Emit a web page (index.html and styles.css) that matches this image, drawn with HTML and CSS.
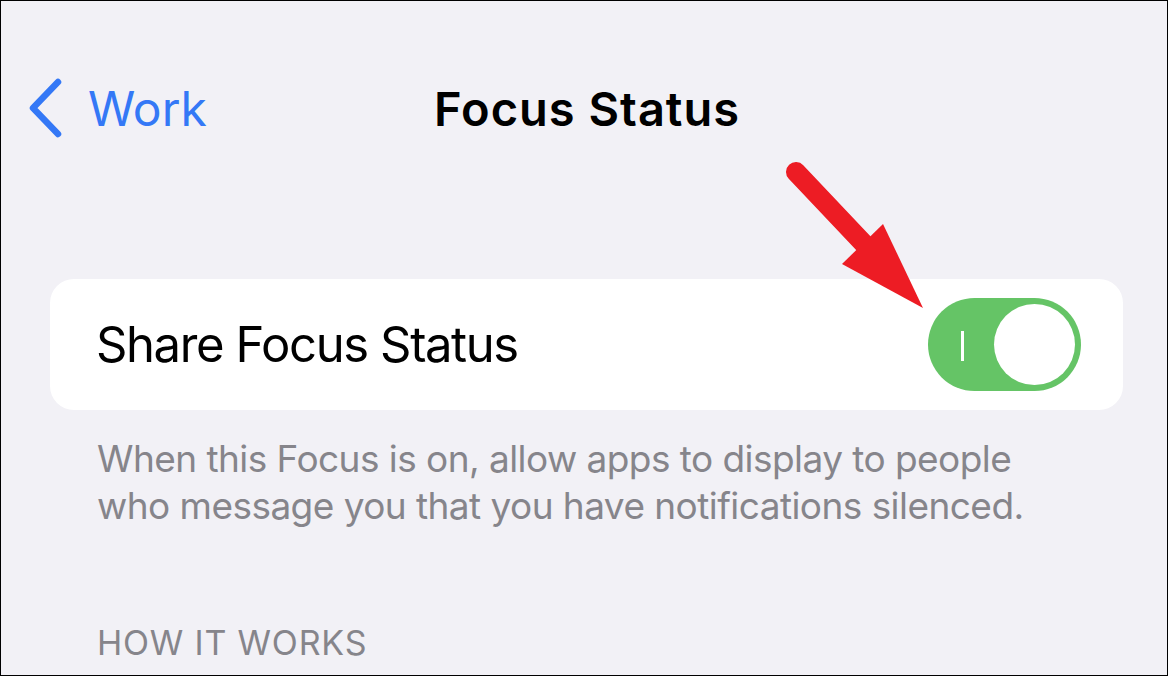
FILE: index.html
```html
<!DOCTYPE html>
<html>
<head>
<meta charset="UTF-8">
<title>Focus Status</title>
<link rel="stylesheet" href="styles.css">
</head>
<body>
  <div class="screen">
    <div class="nav">
      <a class="back" href="#">
        <svg class="chevron" width="40" height="60" viewBox="0 0 40 60">
          <polyline points="32,4 7,30 32,56" fill="none" stroke="#3478f6" stroke-width="6.5" stroke-linecap="round" stroke-linejoin="round"/>
        </svg>
        <span>Work</span>
      </a>
      <div class="title">Focus Status</div>
      <div></div>
    </div>

    <div class="card">
      <div class="card-label">Share Focus Status</div>
      <div class="toggle on">
        <span class="toggle-mark"></span>
        <span class="toggle-knob"></span>
      </div>
    </div>

    <p class="footnote">When this Focus is on, allow apps to display to people who message you that you have notifications silenced.</p>

    <div class="section-header">HOW IT WORKS</div>

    <!-- annotation arrow -->
    <svg class="arrow" width="1168" height="676" viewBox="0 0 1168 676">
      <line x1="796" y1="172" x2="866" y2="246" stroke="#ed1c24" stroke-width="20" stroke-linecap="round"/>
      <polygon points="883,224 842,264 923,308" fill="#ed1c24"/>
    </svg>
  </div>
</body>
</html>
```

FILE: styles.css
```css
* {
  box-sizing: border-box;
}

body {
  margin: 0;
  font-family: Inter, "Noto Sans", Arial, sans-serif;
}

.screen {
  position: relative;
  width: 1168px;
  height: 676px;
  border: 1px solid #000;
  background-color: #f2f1f6;
  overflow: hidden;
}

.nav {
  display: grid;
  grid-template-columns: 1fr auto 1fr;
  align-items: center;
  height: 78px;
  margin-top: 68px;
}

.back {
  display: flex;
  align-items: center;
  gap: 22px;
  padding-left: 25px;
  color: #3478f6;
  text-decoration: none;
  font-size: 48px;
}

.title {
  font-size: 47px;
  font-weight: 600;
  letter-spacing: 1px;
  color: #000;
  padding-left: 6px;
}

.card {
  display: flex;
  align-items: center;
  justify-content: space-between;
  height: 131px;
  margin: 132px 44px 0 49px;
  padding: 0 42px 0 46px;
  background-color: #fff;
  border-radius: 24px;
}

.card-label {
  font-size: 49px;
  letter-spacing: -1.4px;
  color: #000;
}

.toggle {
  position: relative;
  width: 153px;
  height: 93px;
  border-radius: 47px;
  background-color: #e9e9eb;
}

.toggle.on {
  background-color: #65c466;
}

/* the little "I" accessibility label */
.toggle-mark {
  position: absolute;
  left: 33px;
  top: 33px;
  width: 3px;
  height: 30px;
  background-color: #fff;
}

.toggle-knob {
  position: absolute;
  right: 6px;
  top: 6px;
  width: 81px;
  height: 81px;
  border-radius: 50%;
  background-color: #fff;
}

.footnote {
  margin: 25px 110px 0 96px;
  font-size: 37px;
  line-height: 47px;
  letter-spacing: -0.55px;
  color: #86858b;
}

.section-header {
  margin: 94px 0 0 96px;
  font-size: 34px;
  line-height: 40px;
  letter-spacing: 0.8px;
  color: #86858b;
}

.arrow {
  position: absolute;
  left: -1px;
  top: -1px;
  pointer-events: none;
}
```
